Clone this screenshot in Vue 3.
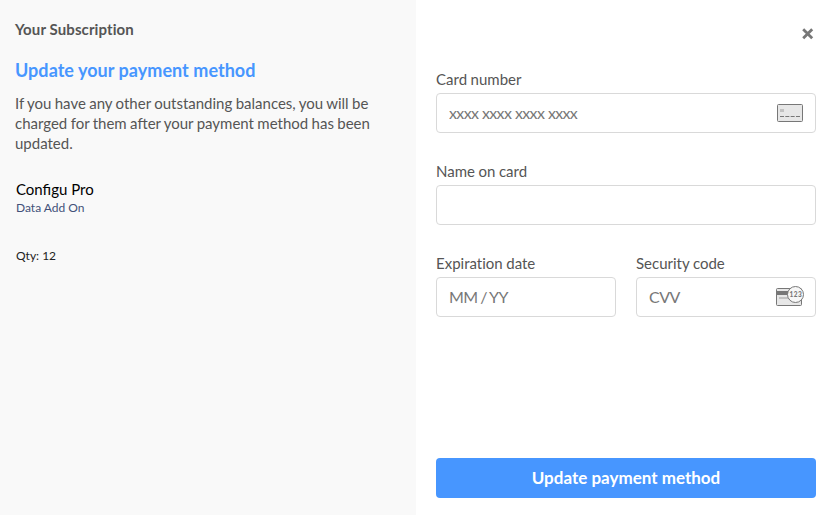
<script setup>
import { ref } from 'vue'

const cardNumber = ref('')
const cardName = ref('')
const expiry = ref('')
const cvv = ref('')
</script>

<template>
  <div class="checkout">
    <aside class="summary">
      <h1 class="summary-title">Your Subscription</h1>
      <h2 class="summary-heading">Update your payment method</h2>
      <p class="summary-text">
        If you have any other outstanding balances, you will be charged for them after your payment method has been updated.
      </p>
      <div class="item">
        <div class="item-name">Configu Pro</div>
        <div class="item-type">Data Add On</div>
        <div class="item-qty">Qty: 12</div>
      </div>
    </aside>

    <form class="payment" @submit.prevent>
      <div class="top">
        <button type="button" class="close" aria-label="Close">
          <svg width="12" height="12" viewBox="0 0 12 12">
            <path d="M1.2 1.2 10.2 10.2M10.2 1.2 1.2 10.2" stroke="#777" stroke-width="2.8" fill="none" />
          </svg>
        </button>
      </div>

      <label class="field">
        <span class="label">Card number</span>
        <span class="control">
          <input v-model="cardNumber" class="input card-number" placeholder="xxxx xxxx xxxx xxxx" />
          <svg class="card-icon" width="26" height="18" viewBox="0 0 26 18">
            <rect x=".5" y=".5" width="25" height="17" rx="1" fill="#e7e7e7" stroke="#777" />
            <rect x="3" y="5" width="4" height="3" fill="#c2c2c2" />
            <path d="M3 12.5H23" stroke="#777" stroke-dasharray="4 1.33" />
          </svg>
        </span>
      </label>

      <label class="field">
        <span class="label">Name on card</span>
        <span class="control">
          <input v-model="cardName" class="input" />
        </span>
      </label>

      <div class="row">
        <label class="field">
          <span class="label">Expiration date</span>
          <span class="control">
            <input v-model="expiry" class="input" placeholder="MM / YY" />
          </span>
        </label>
        <label class="field">
          <span class="label">Security code</span>
          <span class="control">
            <input v-model="cvv" class="input" placeholder="CVV" />
            <svg class="cvv-icon" width="28" height="20" viewBox="0 0 28 20">
              <rect x=".5" y="2.5" width="25" height="17" rx="1" fill="#e7e7e7" stroke="#777" />
              <rect x="1" y="5" width="24" height="4" fill="#777" />
              <rect x="3" y="11" width="18" height="2" fill="#c2c2c2" />
              <circle cx="19.5" cy="8.5" r="8" fill="#f7f7f7" stroke="#777" />
              <text x="19.8" y="10.8" class="cvv-digits" text-anchor="middle">123</text>
            </svg>
          </span>
        </label>
      </div>

      <button type="submit" class="submit">Update payment method</button>
    </form>
  </div>
</template>

<style>
body {
  margin: 0;
  background: #fff;
}
</style>

<style scoped>
.checkout {
  display: flex;
  width: 833px;
  height: 515px;
  overflow: hidden;
  font-family: Lato, sans-serif;
  font-size: 15px;
  line-height: 20px;
  color: #555;
}
.summary {
  box-sizing: border-box;
  width: 416px;
  padding: 19px 15px;
  background: #f9f9f9;
}
.summary-title {
  margin: 0;
  font-size: 15px;
  font-weight: 700;
  line-height: 20px;
  font-variant-ligatures: none;
  letter-spacing: 0.1px;
}
.summary-heading {
  margin: 19px 0 0;
  font-size: 18px;
  font-weight: 700;
  line-height: 24px;
  letter-spacing: 0.04px;
  color: #4796ff;
}
.summary-text {
  margin: 11px 0 0;
  word-spacing: -0.46px;
}
.item {
  margin-top: 26px;
  padding-left: 1px;
  color: #000;
}
.item-type {
  margin-top: 1px;
  font-size: 12px;
  line-height: 16px;
  color: #425179;
}
.item-qty {
  margin-top: 32px;
  font-size: 12px;
  line-height: 16px;
  color: #222;
}
.payment {
  box-sizing: border-box;
  display: flex;
  flex-direction: column;
  width: 417px;
  padding: 27px 17px 17px 20px;
}
.top {
  display: flex;
  justify-content: flex-end;
  height: 42px;
}
.close {
  display: flex;
  width: 12px;
  height: 12px;
  margin: 1px 2px 0 0;
  padding: 0;
  border: 0;
  background: none;
}
.field {
  display: block;
  min-width: 0;
  height: 92px;
}
.label {
  display: block;
  height: 24px;
  font-variant-ligatures: none;
  word-spacing: -0.3px;
}
.control {
  box-sizing: border-box;
  display: flex;
  align-items: center;
  height: 40px;
  padding: 0 12px;
  border: 1px solid #d9d9d9;
  border-radius: 4px;
  background: #fff;
}
.input {
  box-sizing: border-box;
  flex: 1;
  min-width: 0;
  height: 36px;
  padding: 0 0 2px;
  border: 0;
  outline: none;
  background: none;
  font: inherit;
  font-size: 16px;
  letter-spacing: -0.5px;
  word-spacing: -1px;
  color: #555;
}
.card-number {
  letter-spacing: -0.65px;
  word-spacing: 0.25px;
}
.input::placeholder {
  color: #777;
  opacity: 1;
}
.cvv-icon {
  margin: 0 -1px 2px 0;
}
.cvv-digits {
  font-family: Lato, sans-serif;
  font-size: 6.5px;
  font-weight: 900;
  letter-spacing: 0.5px;
  fill: #777;
}
.row {
  display: grid;
  grid-template-columns: minmax(0, 1fr) minmax(0, 1fr);
  gap: 20px;
}
.submit {
  height: 40px;
  margin-top: auto;
  padding: 0 0 2px;
  border: 0;
  border-radius: 4px;
  background: #4796ff;
  color: #fff;
  font-family: inherit;
  font-size: 17px;
  font-weight: 700;
}
</style>
